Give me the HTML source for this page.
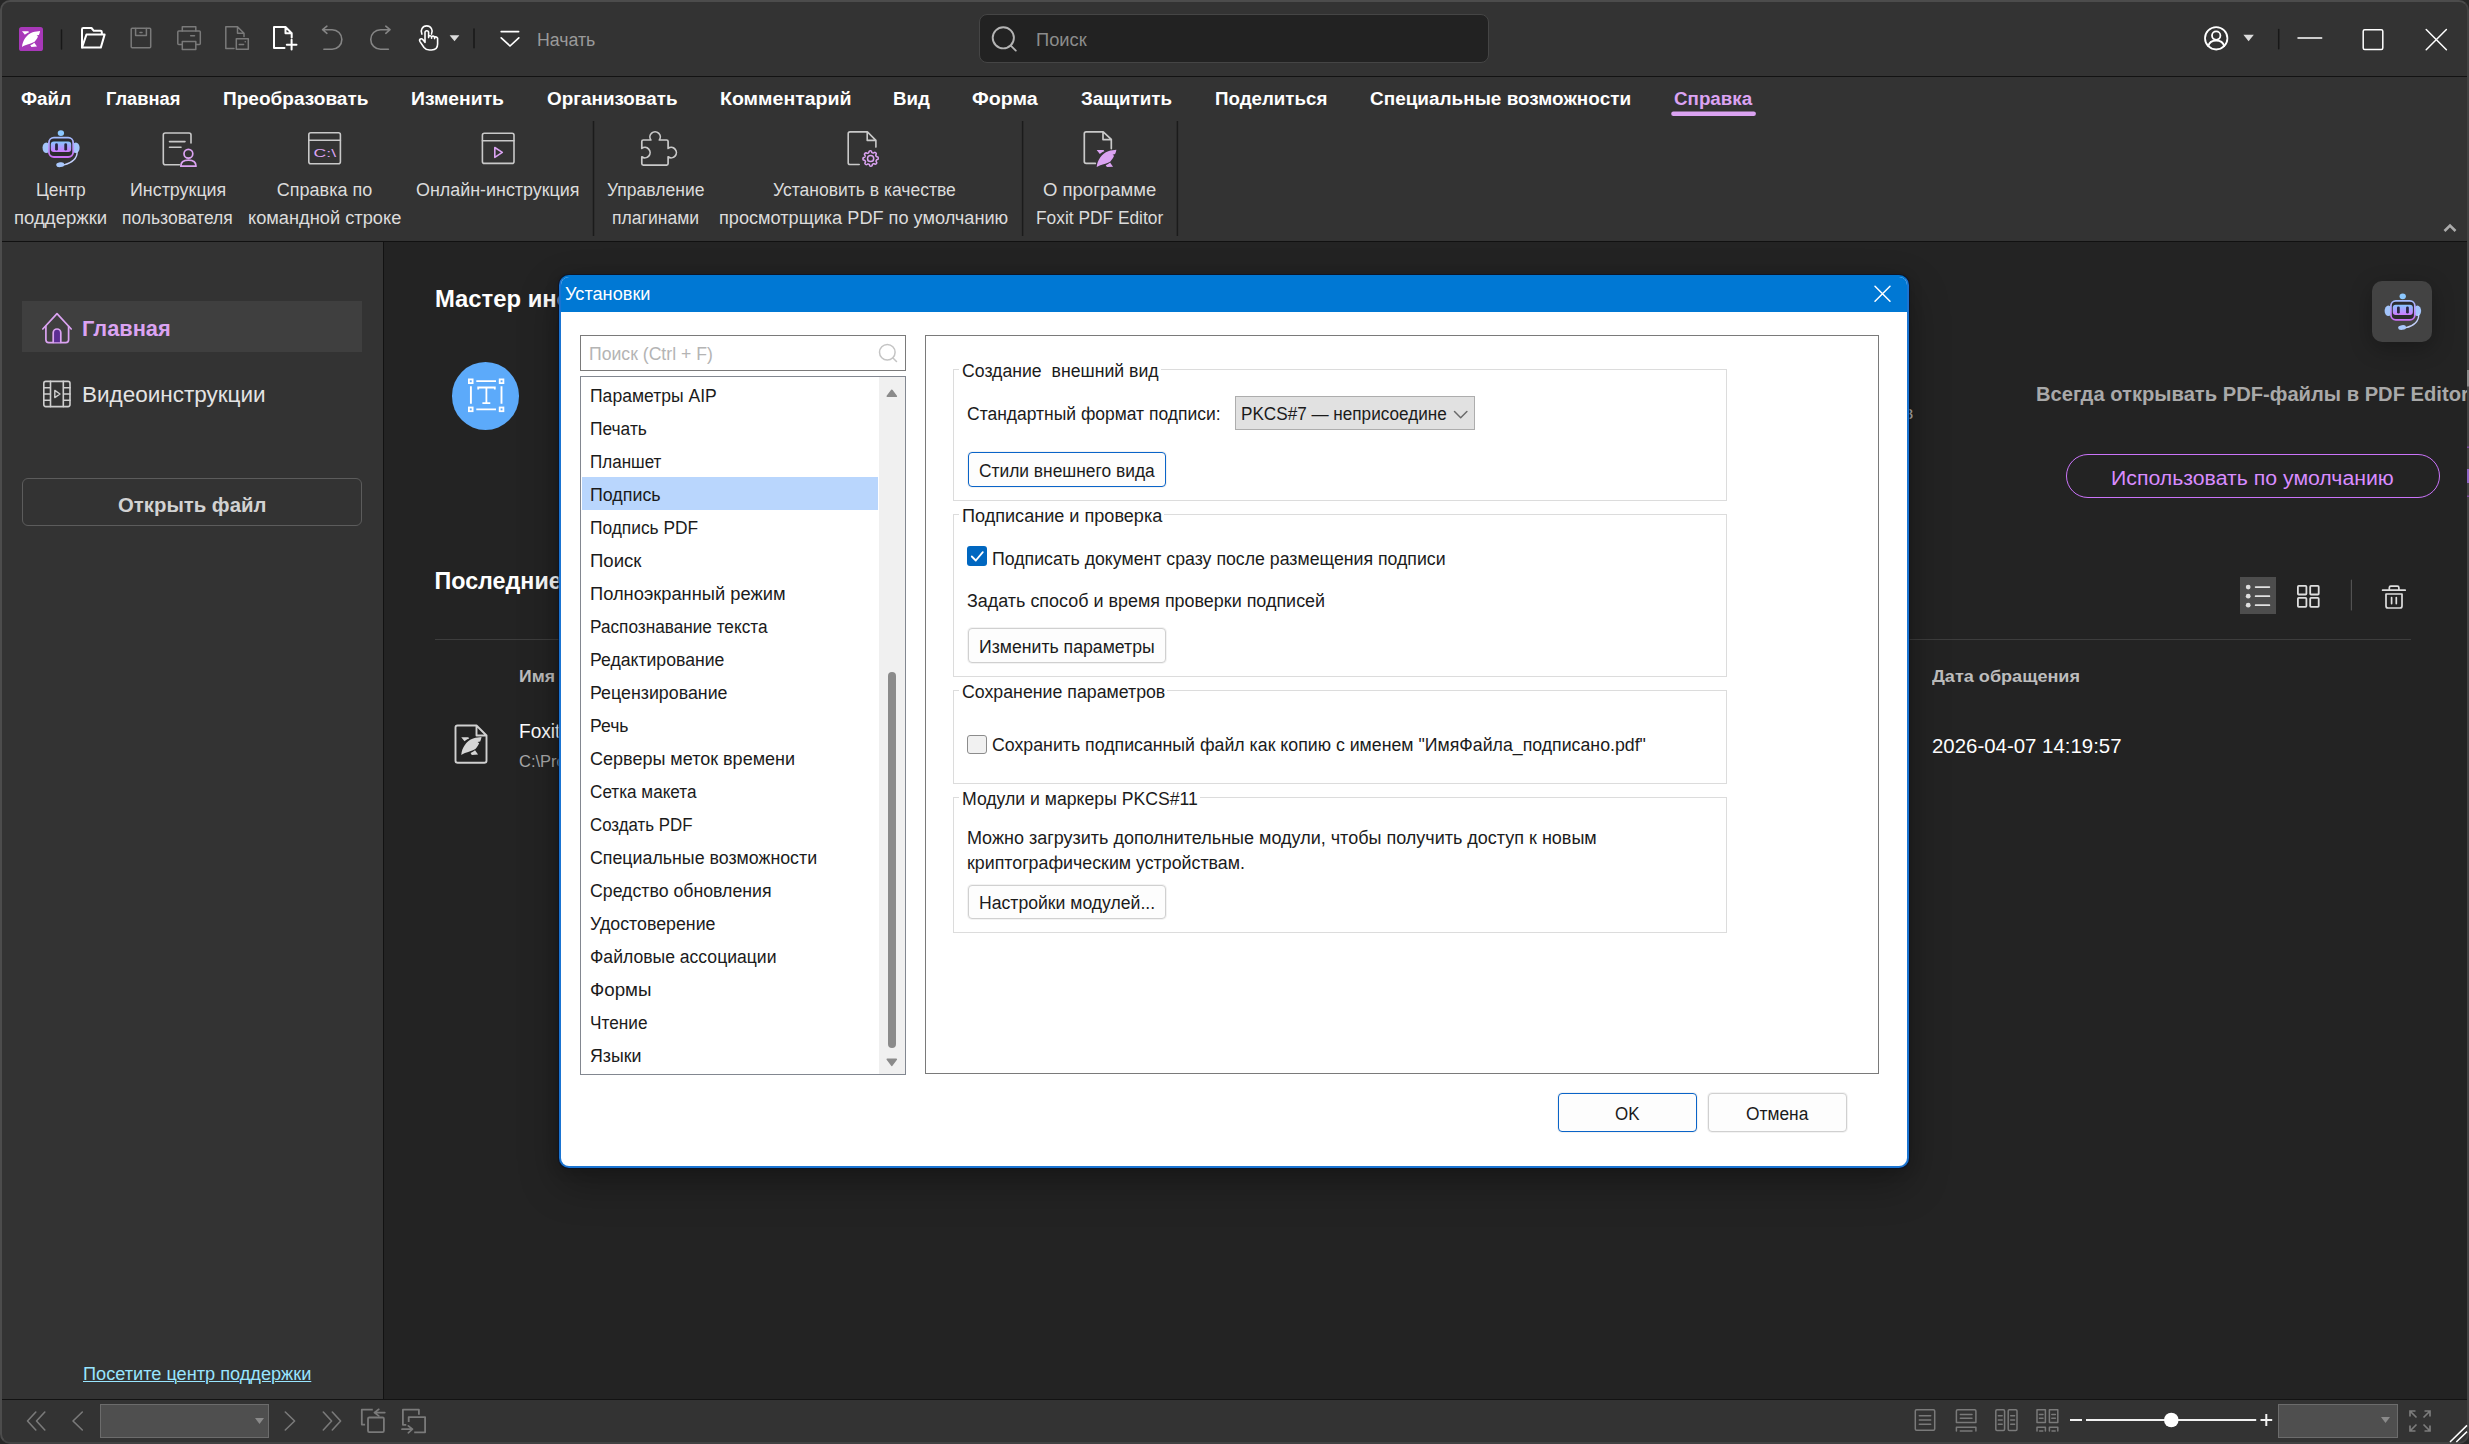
<!DOCTYPE html>
<html lang="ru"><head><meta charset="utf-8"><title>Foxit PDF Editor</title>
<style>
html,body{margin:0;padding:0}
body{width:2469px;height:1444px;position:relative;overflow:hidden;background:#272727;font-family:"Liberation Sans",sans-serif}
.a{position:absolute}
.t{position:absolute;white-space:pre;line-height:1;transform-origin:0 0}
.gb{box-sizing:border-box;border:1px solid #dcdcdc}
.btn{box-sizing:border-box;border:1px solid #d0d0d0;border-radius:4px;background:#fdfdfd;box-shadow:0 0 0 1px #f3f3f3}
.clip{position:absolute;overflow:hidden}
</style></head><body>
<!-- ===== app chrome ===== -->
<div class="a" style="left:0;top:0;width:2469px;height:1444px;box-sizing:border-box;border:2px solid #4c4c4c;border-right-color:#424242;border-bottom-color:#424242;border-radius:10px;background:#333333;overflow:hidden">
  <!-- title bar bottom line -->
  <div class="a" style="left:0;top:74px;width:2465px;height:1px;background:#131313"></div>
  <!-- ribbon bottom line -->
  <div class="a" style="left:0;top:239px;width:2465px;height:1px;background:#111111"></div>
  <!-- main dark area -->
  <div class="a" style="left:382px;top:240px;width:2083px;height:1157px;background:#232323"></div>
  <div class="a" style="left:381px;top:240px;width:1px;height:1157px;background:#121212"></div>
  <!-- status bar line -->
  <div class="a" style="left:0;top:1397px;width:2465px;height:1px;background:#131313"></div>
</div>
<!-- search box -->
<div class="a" style="left:979px;top:14px;width:510px;height:49px;box-sizing:border-box;background:#222222;border:1px solid #454545;border-radius:8px"></div>
<!-- sidebar selected -->
<div class="a" style="left:22px;top:301px;width:340px;height:51px;background:#3f3f3f"></div>
<!-- open file button -->
<div class="a" style="left:22px;top:478px;width:340px;height:48px;box-sizing:border-box;border:1px solid #5c5c5c;border-radius:6px"></div>
<!-- blue circle -->
<div class="a" style="left:451.700px;top:361.700px;width:67.800px;height:68.400px;border-radius:50%;background:#5caafa"></div>
<!-- robot button -->
<div class="a" style="left:2372px;top:281px;width:60px;height:61px;border-radius:10px;background:#434343;box-shadow:0 6px 22px rgba(0,0,0,.28)"></div>
<!-- pill button -->
<div class="a" style="left:2066.300px;top:453.800px;width:373.700px;height:44px;box-sizing:border-box;border:1.500px solid #cb74fa;border-radius:22px"></div>
<!-- list view highlight -->
<div class="a" style="left:2240px;top:577px;width:36.200px;height:37px;background:#4d4d4d"></div>
<!-- horizontal rule -->
<div class="a" style="left:435px;top:638.5px;width:1976px;height:1.5px;background:#3d3d3d"></div>
<!-- status combos -->
<div class="a" style="left:100px;top:1404px;width:169px;height:34px;box-sizing:border-box;background:#4f4f4f;border:1px solid #6c6c6c"></div>
<div class="a" style="left:2278px;top:1404px;width:120px;height:34px;box-sizing:border-box;background:#4f4f4f;border:1px solid #6c6c6c"></div>

<svg class="a" style="left:0;top:0" width="2469" height="1444" viewBox="0 0 2469 1444" fill="none" stroke-linecap="round" stroke-linejoin="round">
<defs>
<linearGradient id="rg" x1="0" y1="0" x2="0" y2="1"><stop offset="0" stop-color="#a4bcff"/><stop offset="1" stop-color="#cb6ff6"/></linearGradient>
<linearGradient id="rf" x1="0" y1="0" x2="0" y2="1"><stop offset="0" stop-color="#86c6ff"/><stop offset="1" stop-color="#cf79ff"/></linearGradient>
<g id="robot">
  <ellipse cx="18.400" cy="3.100" rx="3.200" ry="2.900" fill="#8cc8ff"/>
  <ellipse cx="3.800" cy="17.800" rx="3.800" ry="5.300" fill="#a3c4fb"/>
  <ellipse cx="33.300" cy="17.800" rx="3.800" ry="5.300" fill="#a3c4fb"/>
  <rect x="6.400" y="7.700" width="24.300" height="19.300" rx="5" fill="#2b2b2e" stroke="url(#rg)" stroke-width="1.800"/>
  <rect x="8.300" y="11.500" width="20.400" height="10.600" rx="3" fill="url(#rf)"/>
  <rect x="12.600" y="13.300" width="2.800" height="7.300" rx="1.400" fill="#2b2643"/>
  <rect x="21.800" y="13.300" width="2.800" height="7.300" rx="1.400" fill="#2b2643"/>
  <path d="M34.600 21.500C35 28.200 29.500 33.300 21.500 34.900" stroke="#c3d0fb" stroke-width="1.400"/>
  <ellipse cx="17.800" cy="34.700" rx="4.100" ry="2.400" transform="rotate(-8 17.800 34.700)" fill="#a9c8fd"/>
</g>
<g id="foxleaf">
  <path d="M3 19.900C3.600 13.500 7.500 7.500 13.600 5.300C16.500 4.400 19 4.300 21.100 4C20.900 5.500 20.500 6.800 19.900 7.900L17.600 8.500L19 9.600C18.200 11.500 17 13.300 15.600 14.700C13 16.300 9 17.300 6.300 18.200C5 18.700 3.800 19.300 3 19.900Z"/>
  <path d="M3 4.200L9.300 4.200L10.100 5.300C8.300 6 7 6.800 5.900 7.800Z"/>
  <path d="M11.300 18.200C12.800 17.600 14.200 16.700 15.300 15.700L18 19.600L12.400 19.900Z"/>
</g>
</defs>

<!-- logo -->
<rect x="19" y="27" width="24" height="24" rx="2.600" fill="#a838b9"/>
<use href="#foxleaf" x="19" y="27" fill="#fff"/>
<!-- sep -->
<path d="M61.500 30V49" stroke="#181818" stroke-width="1.5"/>
<!-- folder -->
<g stroke="#fff" stroke-width="2">
<path d="M82 47.5V29.300Q82 28 83.300 28H91.500L93.800 30.800H100.500Q101.800 30.800 101.800 32.100V34"/>
<path d="M82 47.600L86.400 34.600H104.600L100.800 47.600Z"/>
</g>
<!-- save -->
<g stroke="#7a7a7a" stroke-width="1.5">
<rect x="131.200" y="28.200" width="19.500" height="19.500" rx="1"/>
<path d="M135.600 28.500V35.400H146.400V28.500M140 32.400H142"/>
</g>
<!-- printer -->
<g stroke="#7a7a7a" stroke-width="1.500">
<path d="M182.300 31V26.800H195.800V31"/>
<rect x="177.800" y="31" width="22.500" height="13.600" rx="1"/>
<rect x="182.300" y="41.400" width="13.500" height="8" fill="#333"/>
<path d="M190.700 35.700H194.500"/>
</g>
<!-- doc with stamp -->
<g stroke="#7a7a7a" stroke-width="1.500">
<path d="M234 48.400H225.800V26.800H237.500L244 33.300V36.500M237.500 27V33.300H244"/>
<rect x="236.300" y="38.800" width="12" height="10.500" fill="#333"/>
<path d="M239.200 44.600H243.600M245.200 41.800H245.300"/>
</g>
<!-- new doc -->
<g stroke="#fff" stroke-width="2">
<path d="M284.500 48H274V27H285.500L291.700 33.200V37.600M285.500 27.300V33.200H291.500"/>
<path d="M286.800 44.700H296.500M291.600 39.800V49.600"/>
</g>
<!-- undo -->
<g stroke="#858585" stroke-width="1.600">
<path d="M326.900 26.200L322.600 29.700L326.900 33.300M322.900 29.700H332.100A9.750 9.750 0 0 1 332.100 49.200H323.900"/>
</g>
<!-- redo -->
<g stroke="#858585" stroke-width="1.600">
<path d="M385.800 26.200L390 29.700L385.800 33.300M389.700 29.700H380.500A9.750 9.750 0 0 0 380.500 49.200H388.400"/>
</g>
<!-- hand -->
<g stroke="#fff" stroke-width="1.600">
<path d="M421.900 34.100A5.500 5.500 0 1 1 431.500 34.100"/>
<path d="M425 42.500V32.500A1.800 1.800 0 0 1 428.600 32.500V37.600M428.600 36.400Q430 35.100 431.600 36.500V38.200M431.600 36.600Q433.200 35.600 434.600 37V38.600M434.600 37.100Q436.600 36.400 437.600 38.200V44Q437.600 50 431.500 50H429.500Q426 50 424 47.500L420 41.600Q419 39.900 420.400 39Q421.800 38.300 423 39.800L425 42.300"/>
</g>
<path d="M449.600 35.200H459.400L454.500 41.200Z" fill="#dcdcdc"/>
<path d="M474 29V47.700" stroke="#181818" stroke-width="1.500"/>
<!-- start icon -->
<g stroke="#fff" stroke-width="1.700"><path d="M501.200 31.600H518.600M501.200 37.800L510 46L518.800 37.800"/></g>
<!-- search icon -->
<g stroke="#b4b4b4" stroke-width="1.900"><circle cx="1003.300" cy="37.800" r="10.600"/><path d="M1010.800 45.600L1015.800 50.600"/></g>
<!-- account -->
<g stroke="#fff" stroke-width="1.800"><circle cx="2216.200" cy="38.300" r="11.200"/><circle cx="2216.200" cy="35.600" r="4.200"/><path d="M2208.300 46.200C2209.500 41.300 2213 40.500 2216.200 40.500C2219.400 40.500 2222.900 41.300 2224.100 46.200"/></g>
<path d="M2243.400 34.800H2253.800L2248.600 41.200Z" fill="#dcdcdc"/>
<path d="M2278.700 29.500V48.700" stroke="#181818" stroke-width="1.500"/>
<g stroke="#fff" stroke-width="1.500">
<path d="M2298 38H2321.700"/>
<rect x="2363.200" y="29.800" width="19.600" height="19.600" rx="1.500"/>
<path d="M2426.200 29.500L2446.400 49.700M2446.400 29.500L2426.200 49.700"/>
</g>
<!-- menu underline -->
<rect x="1671.200" y="111.500" width="84.700" height="4.400" rx="2.200" fill="#dba3f2"/>
<!-- collapse chevron -->
<path d="M2444.500 231L2450 225.500L2455.500 231" stroke="#ababab" stroke-width="2.600" stroke-linecap="butt" stroke-linejoin="miter"/>
<!-- ribbon separators -->
<g stroke="#1b1b1b" stroke-width="1.500" stroke-linecap="butt"><path d="M593.500 121V236M1022.600 121V236M1177.400 121V236"/></g>

<!-- ribbon: robot -->
<use href="#robot" x="42.500" y="130"/>
<!-- ribbon: doc+person -->
<g stroke="#c9c9c9" stroke-width="1.600">
<path d="M179.500 164.800H165.300Q163.300 164.800 163.300 162.800V135Q163.300 133 165.300 133H189Q191 133 191 135V143"/>
<path d="M169.500 141.600H185M169.500 147.200H181"/>
</g>
<g stroke="#dba3f2" stroke-width="1.700">
<circle cx="188.400" cy="153.700" r="4.400"/>
<path d="M180.800 166.200C180.800 162 184 160.200 188.400 160.200C192.800 160.200 196 162 196 166.200Z"/>
</g>
<!-- ribbon: cmd -->
<g stroke="#c9c9c9" stroke-width="1.600">
<rect x="308.800" y="132.800" width="31.600" height="31" rx="2"/>
<path d="M308.800 140.200H340.400"/>
</g>
<text x="313.600" y="157.200" font-family="Liberation Sans, sans-serif" font-size="11.500" font-weight="400" fill="#dba3f2" stroke="none" textLength="22.500" lengthAdjust="spacingAndGlyphs">C:\</text>
<!-- ribbon: online -->
<g stroke="#c9c9c9" stroke-width="1.600">
<rect x="482.400" y="133.200" width="31.600" height="30.200" rx="2"/>
<path d="M482.400 140.800H514"/>
</g>
<path d="M494.800 147.500L502.300 152.400L494.800 157.300Z" stroke="#dba3f2" stroke-width="1.600"/>
<!-- ribbon: puzzle -->
<g stroke="#c9c9c9" stroke-width="1.700" transform="translate(0.700,0.700)">
<path d="M642.600 164.400Q641.100 164.400 641.100 162.900V156.100A5.200 5.200 0 1 0 641.100 147.700V140.800Q641.100 139.300 642.600 139.300H650.150A5.200 5.200 0 1 1 658.650 139.300H665.900Q667.400 139.300 667.400 140.800V147.700A5.200 5.200 0 1 1 667.400 156.100V162.900Q667.400 164.400 665.900 164.400Z"/>
</g>
<!-- ribbon: doc+gear -->
<g stroke="#c9c9c9" stroke-width="1.600" transform="translate(0.200,0.500)">
<path d="M859 164H849.800Q848 164 848 162.200V133.200Q848 131.400 849.800 131.400H867.200L875.700 139.900V146.600M867 131.600V139.900H875.500"/>
</g>
<g stroke="#dba3f2" stroke-width="1.500">
<circle cx="870.6" cy="158.5" r="3.100"/>
<path d="M878.24 158.50L878.19 158.87L877.96 159.22L877.31 159.50L876.68 159.71L876.42 159.96L876.30 160.23L876.20 160.50L876.11 160.78L876.03 161.07L876.08 161.43L876.44 162.00L876.76 162.61L876.70 163.03L876.51 163.35L876.27 163.64L876.00 163.90L875.70 164.13L875.29 164.21L874.64 163.95L874.04 163.65L873.69 163.65L873.41 163.75L873.14 163.88L872.88 164.01L872.62 164.15L872.40 164.44L872.26 165.11L872.04 165.76L871.71 166.02L871.35 166.11L870.98 166.14L870.60 166.14L870.23 166.09L869.88 165.86L869.60 165.21L869.39 164.58L869.14 164.32L868.87 164.20L868.60 164.10L868.32 164.01L868.03 163.93L867.67 163.98L867.10 164.34L866.49 164.66L866.07 164.60L865.75 164.41L865.46 164.17L865.20 163.90L864.97 163.60L864.89 163.19L865.15 162.54L865.45 161.94L865.45 161.59L865.35 161.31L865.22 161.04L865.09 160.78L864.95 160.52L864.66 160.30L863.99 160.16L863.34 159.94L863.08 159.61L862.99 159.25L862.96 158.88L862.96 158.50L863.01 158.13L863.24 157.78L863.89 157.50L864.52 157.29L864.78 157.04L864.90 156.77L865.00 156.50L865.09 156.22L865.17 155.93L865.12 155.57L864.76 155.00L864.44 154.39L864.50 153.97L864.69 153.65L864.93 153.36L865.20 153.10L865.50 152.87L865.91 152.79L866.56 153.05L867.16 153.35L867.51 153.35L867.79 153.25L868.06 153.12L868.32 152.99L868.58 152.85L868.80 152.56L868.94 151.89L869.16 151.24L869.49 150.98L869.85 150.89L870.22 150.86L870.60 150.86L870.97 150.91L871.32 151.14L871.60 151.79L871.81 152.42L872.06 152.68L872.33 152.80L872.60 152.90L872.88 152.99L873.17 153.07L873.53 153.02L874.10 152.66L874.71 152.34L875.13 152.40L875.45 152.59L875.74 152.83L876.00 153.10L876.23 153.40L876.31 153.81L876.05 154.46L875.75 155.06L875.75 155.41L875.85 155.69L875.98 155.96L876.11 156.22L876.25 156.48L876.54 156.70L877.21 156.84L877.86 157.06L878.12 157.39L878.21 157.75L878.24 158.12Z"/>
</g>
<!-- ribbon: doc+foxit -->
<g stroke="#c9c9c9" stroke-width="1.700">
<path d="M1095.300 163.400H1086.200Q1084.300 163.400 1084.300 161.500V133.700Q1084.300 131.800 1086.200 131.800H1103.200L1111.300 139.400V148.600M1103 132V139.600H1111.100"/>
</g>
<g transform="translate(1093.400,145.400) scale(1.090)" fill="#dba3f2"><use href="#foxleaf"/></g>

<!-- sidebar: home -->
<g stroke="#dba3f2" stroke-width="1.700">
<path d="M42.800 329L57 313.600L71.200 329"/>
<path d="M45.900 326.300V339.800Q45.900 342.600 48.700 342.600H65.800Q68.600 342.600 68.600 339.800V326.300"/>
<path d="M53.200 342.300V332.800A3.800 3.800 0 0 1 60.800 332.800V342.300" fill="#5c2d93"/>
</g>
<!-- sidebar: video -->
<g stroke="#cfcfcf" stroke-width="1.600">
<rect x="43.800" y="381.400" width="26.200" height="25.200" rx="2"/>
<path d="M50.500 381.400V406.600M63.300 381.400V406.600M43.800 387.700H50.500M43.800 394H50.500M43.800 400.300H50.500M63.300 387.700H70M63.300 394H70M63.300 400.300H70"/>
<path d="M54.800 390.400L60 394L54.800 397.600Z" stroke-width="1.400"/>
</g>
<!-- blue circle icon -->
<g stroke="#fff" stroke-width="1.800" stroke-linecap="butt" stroke-linejoin="miter">
<rect x="468.900" y="379.400" width="3.700" height="3.700"/><rect x="499.700" y="379.400" width="3.700" height="3.700"/>
<rect x="468.900" y="407.500" width="3.700" height="3.700"/><rect x="499.700" y="407.500" width="3.700" height="3.700"/>
<path d="M476.300 381.100H496M476.300 409.400H496M470.900 386.300V403.800M501.500 386.300V403.800" stroke-width="1.900"/>
<path d="M478.200 389.400V387.500H494.800V389.400M486.400 387.500V403.200M482.400 403.200H490.300" stroke-width="1.800"/>
</g>
<!-- robot small -->
<g transform="translate(2384.600,293.300) scale(0.985)"><use href="#robot"/></g>
<!-- list icon -->
<g stroke="#e2e2e2" stroke-width="1.700" stroke-linecap="round">
<path d="M2255.600 587.100H2269.400M2255.600 596.200H2269.400M2255.600 605.200H2269.400"/>
</g>
<g fill="#dedede"><circle cx="2248.200" cy="587.100" r="2.400"/><circle cx="2248.200" cy="596.200" r="2.400"/><circle cx="2248.200" cy="605.200" r="2.400"/></g>
<!-- grid icon -->
<g stroke="#dedede" stroke-width="1.800">
<rect x="2297.900" y="585.900" width="8.500" height="8.600" rx="0.800"/><rect x="2310.200" y="585.900" width="8.500" height="8.600" rx="0.800"/>
<rect x="2297.900" y="597.900" width="8.500" height="8.900" rx="0.800"/><rect x="2310.200" y="597.900" width="8.500" height="8.900" rx="0.800"/>
</g>
<path d="M2351.400 580V610" stroke="#525252" stroke-width="1.200"/>
<!-- trash -->
<g stroke="#dedede" stroke-width="1.700">
<path d="M2382.600 590.200H2405.200M2389.300 589.800V587.800Q2389.300 586.200 2390.900 586.200H2397.300Q2398.900 586.200 2398.900 587.800V589.800"/>
<path d="M2386 594V606Q2386 608 2388 608H2400Q2402 608 2402 606V594Z"/>
<path d="M2391.600 597.600V603.600M2396.300 597.600V603.600"/>
</g>
<!-- file icon -->
<g stroke="#d0d0d0" stroke-width="1.900">
<path d="M476.500 725.500H457.500Q455.500 725.500 455.500 727.500V760.700Q455.500 762.700 457.500 762.700H484.500Q486.500 762.700 486.500 760.700V735.500L476.500 725.500V735.500H486.300"/>
</g>
<g transform="translate(457.900,732.600) scale(1.120)" fill="#d6d6d6"><use href="#foxleaf"/></g>

<!-- status bar left -->
<g stroke="#7a7a7a" stroke-width="1.600">
<path d="M35.800 1412L27.500 1421L35.800 1430M44.800 1412L36.500 1421L44.800 1430"/>
<path d="M82.300 1412L73 1421L82.300 1430"/>
<path d="M285.300 1412L294.600 1421L285.300 1430"/>
<path d="M323.300 1412L331.600 1421L323.300 1430M332.300 1412L340.600 1421L332.300 1430"/>
<path d="M365.100 1424.600H361.800V1409.700H372.800" stroke-width="1.800" stroke-linecap="butt"/>
<rect x="368" y="1417.500" width="15.900" height="14.600" rx="1.300" stroke-width="1.800"/>
<path d="M384.800 1412.600H374.600M378.800 1409.300L374.400 1412.600L378.800 1415.900" stroke-width="1.700"/>
<path d="M406.300 1424.800H402.900V1409.700H418.900V1414.800" stroke-width="1.800" stroke-linecap="butt"/>
<path d="M408.700 1421.900V1417.100H425.100V1432.300H414.200" stroke-width="1.800" stroke-linecap="butt"/>
<path d="M402 1429.200H412M408.300 1425.900L412.500 1429.200L408.300 1432.800" stroke-width="1.700"/>
</g>
<path d="M255 1418H264L259.500 1424Z" fill="#8a8a8a"/>
<!-- status bar right -->
<g stroke="#7a7a7a" stroke-width="1.500">
<rect x="1915.300" y="1409.800" width="19.400" height="20.400" rx="1.200"/>
<path d="M1919.300 1415.800H1930.700M1919.300 1420H1930.700M1919.300 1424.200H1930.700"/>
<path d="M1956.400 1422.400V1411Q1956.400 1409.800 1957.600 1409.800H1974.700Q1975.900 1409.800 1975.900 1411V1422.400H1956.400M1960.300 1414.600H1972M1960.300 1418.300H1972"/>
<path d="M1956.400 1431V1427.200H1975.900V1431M1960.300 1431H1972"/>
<rect x="1995.800" y="1409.800" width="8.800" height="20.600" rx="1.200"/><rect x="2008.200" y="1409.800" width="8.800" height="20.600" rx="1.200"/>
<path d="M1998.300 1415.800H2002.200M1998.300 1420H2002.200M1998.300 1424.200H2002.200M2010.700 1415.800H2014.600M2010.700 1420H2014.600M2010.700 1424.200H2014.600"/>
<path d="M2037 1422.400V1409.800H2045.400V1422.400ZM2049.400 1422.400V1409.800H2057.800V1422.400Z"/>
<path d="M2039.400 1414.600H2043M2039.400 1418.300H2043M2051.800 1414.600H2055.400M2051.800 1418.300H2055.400"/>
<path d="M2037 1431V1427.200H2045.400V1431M2049.400 1431V1427.200H2057.800V1431M2039.600 1431H2042.800M2052 1431H2055.200"/>
</g>
<g stroke="#f2f2f2" stroke-width="2" stroke-linecap="butt">
<path d="M2070 1420H2082M2086 1420H2256.200M2260.500 1420H2272.200M2266.300 1414V1426"/>
</g>
<circle cx="2171.300" cy="1420" r="7.300" fill="#fff"/>
<path d="M2381 1417H2390L2385.500 1423Z" fill="#8a8a8a"/>
<g stroke="#7c7c7c" stroke-width="1.700" stroke-linecap="butt" stroke-linejoin="miter">
<path d="M2416.500 1417.500L2410 1411M2410 1416.500V1411H2415.500"/>
<path d="M2423.500 1417.500L2430 1411M2430 1416.500V1411H2424.500"/>
<path d="M2416.500 1424.500L2410 1431M2410 1425.500V1431H2415.500"/>
<path d="M2423.500 1424.500L2430 1431M2430 1425.500V1431H2424.500"/>
</g>
<g stroke="#fff" stroke-width="1.500" stroke-linecap="butt"><path d="M2450 1442L2467 1425.400M2456.300 1442L2467 1431.600"/></g>
<rect x="2467" y="370" width="2" height="16.500" fill="#8a8a8a"/><rect x="2467" y="446.500" width="2" height="1.500" fill="#7a4a9a"/><rect x="2467" y="469" width="2" height="14" fill="#8e63c4"/><rect x="2467" y="495.500" width="2" height="1.500" fill="#7a4a9a"/>
</svg>

<div class="clip" style="left:0;top:0;width:2467px;height:1444px">
<span class="t" style="left:537.2px;top:30.6px;font-size:18px;color:#9a9a9a;transform:scaleX(0.9842);">Начать</span>
<span class="t" style="left:1035.5px;top:30.6px;font-size:18px;color:#8c8c8c;transform:scaleX(1.0162);">Поиск</span>
<span class="t" style="left:21.1px;top:89.5px;font-size:18px;font-weight:700;color:#ffffff;transform:scaleX(1.0465);">Файл</span>
<span class="t" style="left:105.8px;top:89.5px;font-size:18px;font-weight:700;color:#ffffff;transform:scaleX(1.0161);">Главная</span>
<span class="t" style="left:223.0px;top:89.5px;font-size:18px;font-weight:700;color:#ffffff;transform:scaleX(1.0582);">Преобразовать</span>
<span class="t" style="left:411.3px;top:89.5px;font-size:18px;font-weight:700;color:#ffffff;transform:scaleX(1.0740);">Изменить</span>
<span class="t" style="left:546.5px;top:89.5px;font-size:18px;font-weight:700;color:#ffffff;transform:scaleX(1.0469);">Организовать</span>
<span class="t" style="left:719.7px;top:89.5px;font-size:18px;font-weight:700;color:#ffffff;transform:scaleX(1.0856);">Комментарий</span>
<span class="t" style="left:893.2px;top:89.5px;font-size:18px;font-weight:700;color:#ffffff;transform:scaleX(1.0394);">Вид</span>
<span class="t" style="left:972.3px;top:89.5px;font-size:18px;font-weight:700;color:#ffffff;transform:scaleX(1.0910);">Форма</span>
<span class="t" style="left:1080.9px;top:89.5px;font-size:18px;font-weight:700;color:#ffffff;transform:scaleX(1.0422);">Защитить</span>
<span class="t" style="left:1214.7px;top:89.5px;font-size:18px;font-weight:700;color:#ffffff;transform:scaleX(1.0395);">Поделиться</span>
<span class="t" style="left:1369.8px;top:89.5px;font-size:18px;font-weight:700;color:#ffffff;transform:scaleX(1.0529);">Специальные возможности</span>
<span class="t" style="left:1673.8px;top:89.5px;font-size:18px;font-weight:700;color:#dba3f2;transform:scaleX(1.0431);">Справка</span>
<span class="t" style="left:35.7px;top:180.7px;font-size:18px;color:#dcdcdc;transform:scaleX(0.9664);">Центр</span>
<span class="t" style="left:13.6px;top:208.9px;font-size:18px;color:#dcdcdc;transform:scaleX(1.0313);">поддержки</span>
<span class="t" style="left:129.6px;top:180.7px;font-size:18px;color:#dcdcdc;transform:scaleX(0.9936);">Инструкция</span>
<span class="t" style="left:122.0px;top:208.9px;font-size:18px;color:#dcdcdc;transform:scaleX(0.9711);">пользователя</span>
<span class="t" style="left:276.8px;top:180.7px;font-size:18px;color:#dcdcdc;">Справка по</span>
<span class="t" style="left:247.8px;top:208.9px;font-size:18px;color:#dcdcdc;transform:scaleX(1.0133);">командной строке</span>
<span class="t" style="left:415.5px;top:180.7px;font-size:18px;color:#dcdcdc;transform:scaleX(0.9940);">Онлайн-инструкция</span>
<span class="t" style="left:606.9px;top:180.7px;font-size:18px;color:#dcdcdc;transform:scaleX(0.9742);">Управление</span>
<span class="t" style="left:612.1px;top:208.9px;font-size:18px;color:#dcdcdc;transform:scaleX(0.9757);">плагинами</span>
<span class="t" style="left:772.5px;top:180.7px;font-size:18px;color:#dcdcdc;transform:scaleX(0.9727);">Установить в качестве</span>
<span class="t" style="left:718.9px;top:208.9px;font-size:18px;color:#dcdcdc;transform:scaleX(1.0087);">просмотрщика PDF по умолчанию</span>
<span class="t" style="left:1042.9px;top:180.7px;font-size:18px;color:#dcdcdc;transform:scaleX(1.0279);">О программе</span>
<span class="t" style="left:1035.9px;top:208.9px;font-size:18px;color:#dcdcdc;transform:scaleX(0.9634);">Foxit PDF Editor</span>
<span class="t" style="left:81.5px;top:317.8px;font-size:22px;font-weight:700;color:#dba3f2;transform:scaleX(0.9912);">Главная</span>
<span class="t" style="left:82.3px;top:383.6px;font-size:22px;color:#e4e4e4;transform:scaleX(1.0224);">Видеоинструкции</span>
<span class="t" style="left:117.5px;top:495.5px;font-size:19.5px;font-weight:700;color:#d2d2d2;transform:scaleX(1.0430);">Открыть файл</span>
<span class="t" style="left:83.1px;top:1364.7px;font-size:18px;color:#98e5ff;transform:scaleX(1.0084);text-decoration:underline;text-underline-offset:1px;text-decoration-thickness:1.3px;">Посетите центр поддержки</span>
<span class="t" style="left:435.0px;top:287.9px;font-size:23.3px;font-weight:700;color:#ffffff;transform:scaleX(1.0220);">Мастер инс</span>
<span class="t" style="left:434.5px;top:569.6px;font-size:23.3px;font-weight:700;color:#ffffff;">Последние</span>
<span class="t" style="left:518.5px;top:668.2px;font-size:17px;font-weight:700;color:#bdbdbd;transform:scaleX(1.0369);">Имя</span>
<span class="t" style="left:518.5px;top:720.6px;font-size:20px;color:#ffffff;transform:scaleX(0.9550);">Foxit</span>
<span class="t" style="left:518.5px;top:753.3px;font-size:17px;color:#a8a8a8;transform:scaleX(0.9700);">C:\Pro</span>
<span class="t" style="left:1904.0px;top:404.5px;font-size:17.5px;color:#b4b4b4;">в</span>
<span class="t" style="left:2036.1px;top:383.9px;font-size:20px;font-weight:700;color:#a9a9a9;transform:scaleX(1.0080);">Всегда открывать PDF-файлы в PDF Editor</span>
<span class="t" style="left:2111.3px;top:467.5px;font-size:20px;color:#d98cff;transform:scaleX(1.0632);">Использовать по умолчанию</span>
<span class="t" style="left:1932.0px;top:668.2px;font-size:17px;font-weight:700;color:#bdbdbd;transform:scaleX(1.0630);">Дата обращения</span>
<span class="t" style="left:1932.4px;top:735.2px;font-size:21px;color:#ffffff;transform:scaleX(0.9718);">2026-04-07 14:19:57</span>
</div>
<!-- ===== dialog ===== -->
<div class="a" style="left:558.700px;top:274.700px;width:1350.500px;height:893.200px;box-sizing:border-box;background:#ffffff;border:2px solid #1a74d2;border-top-color:#0078d4;border-radius:10px;box-shadow:0 0 0 1px rgba(0,14,50,.55),0 16px 40px rgba(0,0,0,.30),0 2px 14px rgba(0,0,0,.18);overflow:hidden">
  <div class="a" style="left:-2px;top:-2px;width:1352px;height:36.900px;background:#0078d4"></div>
</div>
<!-- search box -->
<div class="a" style="left:580px;top:335.300px;width:326px;height:35.500px;box-sizing:border-box;border:1px solid #7a7a7a;background:#fff"></div>
<!-- list box -->
<div class="a" style="left:580px;top:376px;width:326px;height:699px;box-sizing:border-box;border:1px solid #828790;background:#fff"></div>
<div class="a" style="left:879px;top:377px;width:26px;height:697px;background:#f0f0f0"></div>
<div class="a" style="left:887.500px;top:672px;width:8.400px;height:375.500px;border-radius:4.200px;background:#8b8b8b"></div>
<div class="a" style="left:582px;top:477px;width:296px;height:32.700px;background:#b9d6fd"></div>
<!-- right panel -->
<div class="a" style="left:925px;top:335px;width:953.700px;height:739px;box-sizing:border-box;border:1px solid #7a7a7a;background:#fff"></div>
<!-- group boxes -->
<div class="a gb" style="left:953px;top:369px;width:773.800px;height:132px"></div>
<div class="a gb" style="left:953px;top:514.200px;width:773.800px;height:162.800px"></div>
<div class="a gb" style="left:953px;top:690.200px;width:773.800px;height:93.800px"></div>
<div class="a gb" style="left:953px;top:797.200px;width:773.800px;height:135.800px"></div>
<!-- legend backgrounds -->
<div class="a" style="left:959px;top:362px;width:202px;height:16px;background:#fff"></div>
<div class="a" style="left:959px;top:507px;width:205px;height:16px;background:#fff"></div>
<div class="a" style="left:959px;top:683px;width:208px;height:16px;background:#fff"></div>
<div class="a" style="left:959px;top:790px;width:241px;height:16px;background:#fff"></div>
<!-- combo -->
<div class="a" style="left:1235px;top:396.300px;width:240px;height:33.400px;box-sizing:border-box;border:1px solid #adadad;background:#e1e1e1"></div>
<!-- buttons -->
<div class="a btn" style="left:968px;top:452.400px;width:198px;height:34.400px;border-color:#0a64c8"></div>
<div class="a btn" style="left:968px;top:628.400px;width:198px;height:34.400px"></div>
<div class="a btn" style="left:968px;top:884.600px;width:198px;height:34.400px"></div>
<div class="a btn" style="left:1558px;top:1093px;width:139px;height:39px;border-color:#0a64c8"></div>
<div class="a btn" style="left:1708.300px;top:1093px;width:139px;height:39px"></div>
<!-- checkboxes -->
<div class="a" style="left:967.300px;top:546.400px;width:19.500px;height:19.500px;border-radius:3px;background:#0067c0"></div>
<div class="a" style="left:967.300px;top:734.600px;width:19.500px;height:19.500px;box-sizing:border-box;border-radius:3px;background:#f1f1f1;border:1px solid #8c8c8c"></div>
<svg class="a" style="left:0;top:0" width="2469" height="1444" viewBox="0 0 2469 1444" fill="none" stroke-linecap="round" stroke-linejoin="round">
<!-- close X -->
<path d="M1875 286.300L1890 301.300M1890 286.300L1875 301.300" stroke="#fff" stroke-width="1.500"/>
<!-- search icon -->
<g stroke="#c4c4c4" stroke-width="1.500"><circle cx="887.300" cy="352.200" r="7.800"/><path d="M893 358L896.500 361.500"/></g>
<!-- scroll arrows -->
<path d="M887.300 396.300L891.800 390.300L896.300 396.300Z" fill="#8b8b8b" stroke="#8b8b8b" stroke-width="1.600"/>
<path d="M887.300 1059.300L891.800 1065.300L896.300 1059.300Z" fill="#8b8b8b" stroke="#8b8b8b" stroke-width="1.600"/>
<!-- combo chevron -->
<path d="M1454.500 411.500L1460.700 417.700L1466.900 411.500" stroke="#6a6a6a" stroke-width="1.500"/>
<!-- check -->
<path d="M971.800 556.500L975.800 560.500L982.800 552.200" stroke="#fff" stroke-width="1.800"/>
</svg>

<span class="t" style="left:564.5px;top:284.7px;font-size:18px;color:#ffffff;transform:scaleX(1.0090);">Установки</span>
<span class="t" style="left:589.2px;top:344.8px;font-size:18px;color:#b4b4b4;transform:scaleX(0.9796);">Поиск (Ctrl + F)</span>
<span class="t" style="left:590.0px;top:386.5px;font-size:18px;color:#1b1b1b;transform:scaleX(0.9756);">Параметры AIP</span>
<span class="t" style="left:590.0px;top:419.5px;font-size:18px;color:#1b1b1b;transform:scaleX(0.9649);">Печать</span>
<span class="t" style="left:590.0px;top:452.5px;font-size:18px;color:#1b1b1b;transform:scaleX(0.9457);">Планшет</span>
<span class="t" style="left:590.0px;top:485.5px;font-size:18px;color:#1b1b1b;transform:scaleX(0.9909);">Подпись</span>
<span class="t" style="left:590.0px;top:518.5px;font-size:18px;color:#1b1b1b;transform:scaleX(0.9639);">Подпись PDF</span>
<span class="t" style="left:590.0px;top:551.5px;font-size:18px;color:#1b1b1b;transform:scaleX(1.0323);">Поиск</span>
<span class="t" style="left:590.0px;top:584.5px;font-size:18px;color:#1b1b1b;transform:scaleX(1.0168);">Полноэкранный режим</span>
<span class="t" style="left:590.0px;top:617.5px;font-size:18px;color:#1b1b1b;transform:scaleX(0.9556);">Распознавание текста</span>
<span class="t" style="left:590.0px;top:650.5px;font-size:18px;color:#1b1b1b;transform:scaleX(0.9801);">Редактирование</span>
<span class="t" style="left:590.0px;top:683.5px;font-size:18px;color:#1b1b1b;transform:scaleX(0.9892);">Рецензирование</span>
<span class="t" style="left:590.0px;top:716.5px;font-size:18px;color:#1b1b1b;transform:scaleX(0.9774);">Речь</span>
<span class="t" style="left:590.0px;top:749.5px;font-size:18px;color:#1b1b1b;">Серверы меток времени</span>
<span class="t" style="left:590.0px;top:782.5px;font-size:18px;color:#1b1b1b;transform:scaleX(0.9520);">Сетка макета</span>
<span class="t" style="left:590.0px;top:815.5px;font-size:18px;color:#1b1b1b;transform:scaleX(0.9369);">Создать PDF</span>
<span class="t" style="left:590.0px;top:848.5px;font-size:18px;color:#1b1b1b;transform:scaleX(0.9882);">Специальные возможности</span>
<span class="t" style="left:590.0px;top:881.5px;font-size:18px;color:#1b1b1b;transform:scaleX(0.9842);">Средство обновления</span>
<span class="t" style="left:590.0px;top:914.5px;font-size:18px;color:#1b1b1b;transform:scaleX(0.9882);">Удостоверение</span>
<span class="t" style="left:590.0px;top:947.5px;font-size:18px;color:#1b1b1b;transform:scaleX(0.9764);">Файловые ассоциации</span>
<span class="t" style="left:590.0px;top:980.5px;font-size:18px;color:#1b1b1b;transform:scaleX(1.0418);">Формы</span>
<span class="t" style="left:590.0px;top:1013.5px;font-size:18px;color:#1b1b1b;transform:scaleX(0.9573);">Чтение</span>
<span class="t" style="left:590.0px;top:1046.5px;font-size:18px;color:#1b1b1b;transform:scaleX(0.9880);">Языки</span>
<span class="t" style="left:961.5px;top:362.2px;font-size:18px;color:#1b1b1b;transform:scaleX(0.9815);">Создание  внешний вид</span>
<span class="t" style="left:966.9px;top:405.3px;font-size:18px;color:#1b1b1b;transform:scaleX(0.9713);">Стандартный формат подписи:</span>
<span class="t" style="left:1241.1px;top:405.3px;font-size:18px;color:#1b1b1b;transform:scaleX(0.9517);">PKCS#7 — неприсоедине</span>
<span class="t" style="left:979.0px;top:461.9px;font-size:18px;color:#1b1b1b;transform:scaleX(0.9650);">Стили внешнего вида</span>
<span class="t" style="left:961.5px;top:506.9px;font-size:18px;color:#1b1b1b;transform:scaleX(1.0046);">Подписание и проверка</span>
<span class="t" style="left:992.4px;top:549.5px;font-size:18px;color:#1b1b1b;transform:scaleX(0.9845);">Подписать документ сразу после размещения подписи</span>
<span class="t" style="left:966.9px;top:592.2px;font-size:18px;color:#1b1b1b;transform:scaleX(0.9961);">Задать способ и время проверки подписей</span>
<span class="t" style="left:979.0px;top:637.7px;font-size:18px;color:#1b1b1b;transform:scaleX(0.9817);">Изменить параметры</span>
<span class="t" style="left:961.5px;top:683.3px;font-size:18px;color:#1b1b1b;transform:scaleX(0.9860);">Сохранение параметров</span>
<span class="t" style="left:991.6px;top:736.2px;font-size:18px;color:#1b1b1b;transform:scaleX(0.9856);">Сохранить подписанный файл как копию с именем "ИмяФайла_подписано.pdf"</span>
<span class="t" style="left:961.5px;top:790.1px;font-size:18px;color:#1b1b1b;transform:scaleX(0.9801);">Модули и маркеры PKCS#11</span>
<span class="t" style="left:966.9px;top:829.3px;font-size:18px;color:#1b1b1b;">Можно загрузить дополнительные модули, чтобы получить доступ к новым</span>
<span class="t" style="left:966.9px;top:854.0px;font-size:18px;color:#1b1b1b;transform:scaleX(0.9890);">криптографическим устройствам.</span>
<span class="t" style="left:979.1px;top:893.9px;font-size:18px;color:#1b1b1b;transform:scaleX(0.9787);">Настройки модулей...</span>
<span class="t" style="left:1615.0px;top:1104.5px;font-size:18px;color:#1b1b1b;transform:scaleX(0.9417);">OK</span>
<span class="t" style="left:1745.8px;top:1104.5px;font-size:18px;color:#1b1b1b;transform:scaleX(0.9645);">Отмена</span>
</body></html>
